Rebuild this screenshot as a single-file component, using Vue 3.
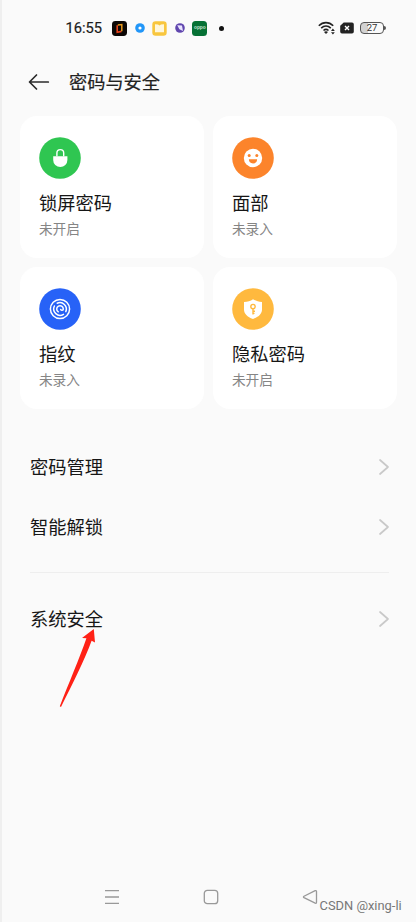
<script setup>
const cards = [
  { icon: 'lock', color: '#2fc651', title: '锁屏密码', state: '未开启' },
  { icon: 'face', color: '#fc842b', title: '面部', state: '未录入' },
  { icon: 'finger', color: '#2762f7', title: '指纹', state: '未录入' },
  { icon: 'shield', color: '#ffb93e', title: '隐私密码', state: '未开启' },
]
const groups = [['密码管理', '智能解锁'], ['系统安全']]
</script>

<template>
  <div class="screen">
    <header class="status">
      <span class="time">16:55</span>
      <div class="apps">
        <svg width="15" height="15" viewBox="0 0 15 15">
          <rect width="15" height="15" rx="3.4" fill="#0c0806" />
          <path d="M5.2 4.2v7.1l4.3-.9" fill="none" stroke="#e8431c" stroke-width="1.6" />
          <path d="M5.8 4.1l4-.5v6.6" fill="none" stroke="#e79a1d" stroke-width="1.5" />
        </svg>
        <svg width="10" height="10" viewBox="0 0 10 10">
          <circle cx="5" cy="5" r="4.8" fill="#2196f8" />
          <circle cx="5" cy="5" r="1.6" fill="#fff" />
        </svg>
        <svg width="15" height="15" viewBox="0 0 15 15">
          <rect x=".3" y=".3" width="14.4" height="14.4" rx="3.2" fill="#f8c63e" />
          <path d="M3 3.2l3 .2 1.5 1 1.5-1 3-.2v8H3z" fill="#fff7db" />
        </svg>
        <svg width="10" height="10" viewBox="0 0 10 10">
          <circle cx="5" cy="5" r="4.8" fill="#6046ae" />
          <path d="M2.2 2.200l4.800.4 1 5.500-3.600-1.800z" fill="#e9e4ff" />
        </svg>
        <span class="oppo">oppo</span>
        <i class="dot"></i>
      </div>
      <div class="signals">
        <svg width="18" height="14" viewBox="0 0 18 14">
          <g fill="none" stroke="#222" stroke-width="1.6">
            <path d="M.8 4.8C5 .5 11 .5 15.200 4.800" />
            <path d="M3.200 7.200c2.900-2.800 6.700-2.800 9.600 0" />
            <path d="M5.500 9.500c1.600-1.400 3.400-1.400 5 0" />
          </g>
          <path d="M6 11l2 2 2-2c-1.200-1-2.800-1-4 0z" fill="#222" />
          <path d="M13 10l1.900-2.400L16.800 10zM13 11.200l1.900 2.400 1.900-2.400z" fill="#222" />
        </svg>
        <svg width="14" height="12" viewBox="0 0 14 12">
          <path d="M3.700.4H12a1.800 1.800 0 0 1 1.800 1.800v7.600a1.800 1.800 0 0 1-1.800 1.800H2A1.800 1.800 0 0 1 .2 9.800V3.700z" fill="#222" />
          <path d="M5 4l4 4M9 4L5 8" stroke="#fff" stroke-width="1.4" />
        </svg>
        <div class="battery"><span>27</span></div>
      </div>
    </header>

    <div class="titlebar">
      <svg width="22" height="18" viewBox="0 0 22 18" fill="none" stroke="#2b2b2b" stroke-width="1.7" stroke-linecap="round" stroke-linejoin="round">
        <path d="M8.500 2L1.500 9l7 7M1.800 9h18.500" />
      </svg>
      <h1>密码与安全</h1>
    </div>

    <main>
      <section class="cards">
        <article v-for="c in cards" :key="c.title" class="card">
          <svg class="badge" viewBox="0 0 42 42">
            <circle cx="21" cy="21" r="20.800" :fill="c.color" />
            <g v-if="c.icon === 'lock'">
              <path d="M14.200 19.200h14.200V23a7.100 7.100 0 0 1-14.200 0z" fill="#fff" />
              <path d="M17.900 18.700V16a3.400 3.400 0 0 1 6.800 0v2.700" fill="none" stroke="#fff" stroke-width="1.400" stroke-linecap="round" />
            </g>
            <g v-else-if="c.icon === 'face'">
              <circle cx="21" cy="21" r="9.200" fill="#fff" />
              <circle cx="17.200" cy="18.600" r="1.500" :fill="c.color" />
              <circle cx="24.800" cy="18.600" r="1.500" :fill="c.color" />
              <path d="M16.900 22.300h8.200a4.100 4.100 0 0 1-8.200 0z" :fill="c.color" />
            </g>
            <g v-else-if="c.icon === 'finger'" fill="none" stroke="#fff" stroke-width="1.500" stroke-linecap="round">
              <circle cx="21" cy="21" r="9.600" />
              <path d="M18.200 15.300A6.400 6.400 0 0 1 26.800 23.600" />
              <path d="M15.400 18A6.400 6.400 0 0 0 24.500 26.300" />
              <path d="M19.300 23.800a3.300 3.300 0 1 1 5-2.800c0 1.500-2 1.800-2.600.5" />
            </g>
            <g v-else>
              <path d="M21 11.200c2.500 1.700 5.500 2.600 9 2.900v7.300c0 4.300-3.300 7.400-9 9.500-5.700-2.100-9-5.200-9-9.500v-7.300c3.500-.3 6.500-1.200 9-2.900z" fill="#fff" />
              <g fill="none" :stroke="c.color" stroke-width="1.400">
                <circle cx="21" cy="18.600" r="2.200" />
                <path d="M21 20.800v5.700M21 23.200h2M21 25.400h1.500" />
              </g>
            </g>
          </svg>
          <h2>{{ c.title }}</h2>
          <p>{{ c.state }}</p>
        </article>
      </section>

      <ul v-for="(g, i) in groups" :key="i" class="group">
        <li v-for="label in g" :key="label">
          <span>{{ label }}</span>
          <svg width="12" height="18" viewBox="0 0 12 18" fill="none" stroke="#c9c9c9" stroke-width="1.700" stroke-linecap="round" stroke-linejoin="round">
            <path d="M2 2l8 7-8 7" />
          </svg>
        </li>
      </ul>
    </main>

    <svg class="pointer" width="40" height="84" viewBox="0 0 40 84">
      <path d="M35.800 2L24 11l4.400.200C22 30 10 58 1.800 79.200l1.200.8C14 58 27 32 33.600 13.800l3.400 1.700z" fill="#ff2116" />
    </svg>

    <nav>
      <svg viewBox="0 0 16 16"><path d="M1 1.700h14M1 8h14M1 14.300h14" /></svg>
      <svg viewBox="0 0 16 16"><rect x="1.300" y="1.300" width="13.400" height="13.400" rx="3" /></svg>
      <svg viewBox="0 0 16 16"><path d="M13.200 1.700L2 7.200q-1.100.7 0 1.400l11.200 5.600q1.300.4 1.300-.9V2.600q0-1.300-1.300-.9z" /></svg>
    </nav>
    <span class="watermark">CSDN @xing-li</span>
  </div>
</template>

<style>
body {
  margin: 0;
}
</style>

<style scoped>
.screen {
  position: relative;
  box-sizing: border-box;
  width: 416px;
  height: 922px;
  display: flex;
  flex-direction: column;
  overflow: hidden;
  background: #fafafa;
  border-left: 2px solid #efefef;
  color: #161616;
  font-family: "Noto Sans CJK SC", sans-serif;
}
h1, h2, p, ul {
  margin: 0;
  padding: 0;
  font-weight: 400;
}
.status {
  display: flex;
  align-items: center;
  height: 56px;
  padding: 0 32px 0 63.500px;
}
.time {
  width: 46.500px;
  font: 400 14.700px/20px Roboto, sans-serif;
  color: #1c1c1c;
  -webkit-text-stroke: 0.200px #1c1c1c;
}
.apps {
  display: flex;
  align-items: center;
  gap: 7.600px;
}
.oppo {
  width: 15px;
  height: 15px;
  border-radius: 3.500px;
  background: #067135;
  color: #c5e2d0;
  font: 700 4.800px/13px "Liberation Sans", sans-serif;
  text-align: center;
}
.dot {
  width: 5px;
  height: 5px;
  margin-left: 4px;
  border-radius: 50%;
  background: #111;
}
.signals {
  display: flex;
  align-items: center;
  gap: 4px;
  margin-left: auto;
}
.battery {
  position: relative;
  box-sizing: border-box;
  width: 24px;
  height: 12px;
  margin-left: 2px;
  border: 1px solid #555;
  border-radius: 4px;
  background: linear-gradient(90deg, #d2d2d2 30%, #fafafa 30%);
  font: 400 9.500px/10px Roboto, sans-serif;
  color: #333;
  text-align: center;
}
.battery::after {
  content: "";
  position: absolute;
  top: 3px;
  right: -3px;
  width: 2px;
  height: 4px;
  border-radius: 0 2px 2px 0;
  background: #555;
}
.titlebar {
  display: flex;
  align-items: center;
  gap: 19px;
  height: 51px;
  padding-left: 26px;
}
h1 {
  margin-top: -1px;
  font-size: 18.200px;
  line-height: 26px;
  color: #222;
  -webkit-text-stroke: 0.200px #222;
}
main {
  flex: 1;
  padding-top: 9px;
}
.cards {
  display: grid;
  grid-template-columns: 184px 184px;
  grid-auto-rows: 142px;
  gap: 9px;
  padding-left: 18.400px;
  margin-bottom: 28px;
}
.card {
  box-sizing: border-box;
  padding: 21px 18.500px 0;
  border-radius: 17px;
  background: #fff;
}
.badge {
  display: block;
  width: 42px;
  height: 42px;
  margin-left: -0.400px;
}
h2 {
  margin-top: 10px;
  font-size: 18.300px;
  line-height: 27px;
}
.card p {
  font-size: 13.700px;
  line-height: 24px;
  color: #858585;
}
.group {
  list-style: none;
  margin: 0 27px 0 28px;
}
.group + .group {
  margin-top: 15px;
  padding-top: 16px;
  border-top: 1px solid #eee;
}
.group li {
  display: flex;
  align-items: center;
  justify-content: space-between;
  height: 60px;
  font-size: 18.300px;
  line-height: 28px;
}
.group li span {
  margin-top: -2px;
}
.group svg {
  margin-right: -1px;
}
.pointer {
  position: absolute;
  left: 56px;
  top: 627px;
}
nav {
  display: flex;
  justify-content: space-between;
  align-items: center;
  height: 50px;
  padding: 0 98px 0 102px;
}
nav svg {
  width: 16px;
  height: 16px;
  fill: none;
  stroke: #999;
  stroke-width: 1.300;
}
.watermark {
  position: absolute;
  left: 317.500px;
  top: 898px;
  font: 12.900px/16px Roboto, sans-serif;
  color: #777;
  white-space: nowrap;
}
</style>
